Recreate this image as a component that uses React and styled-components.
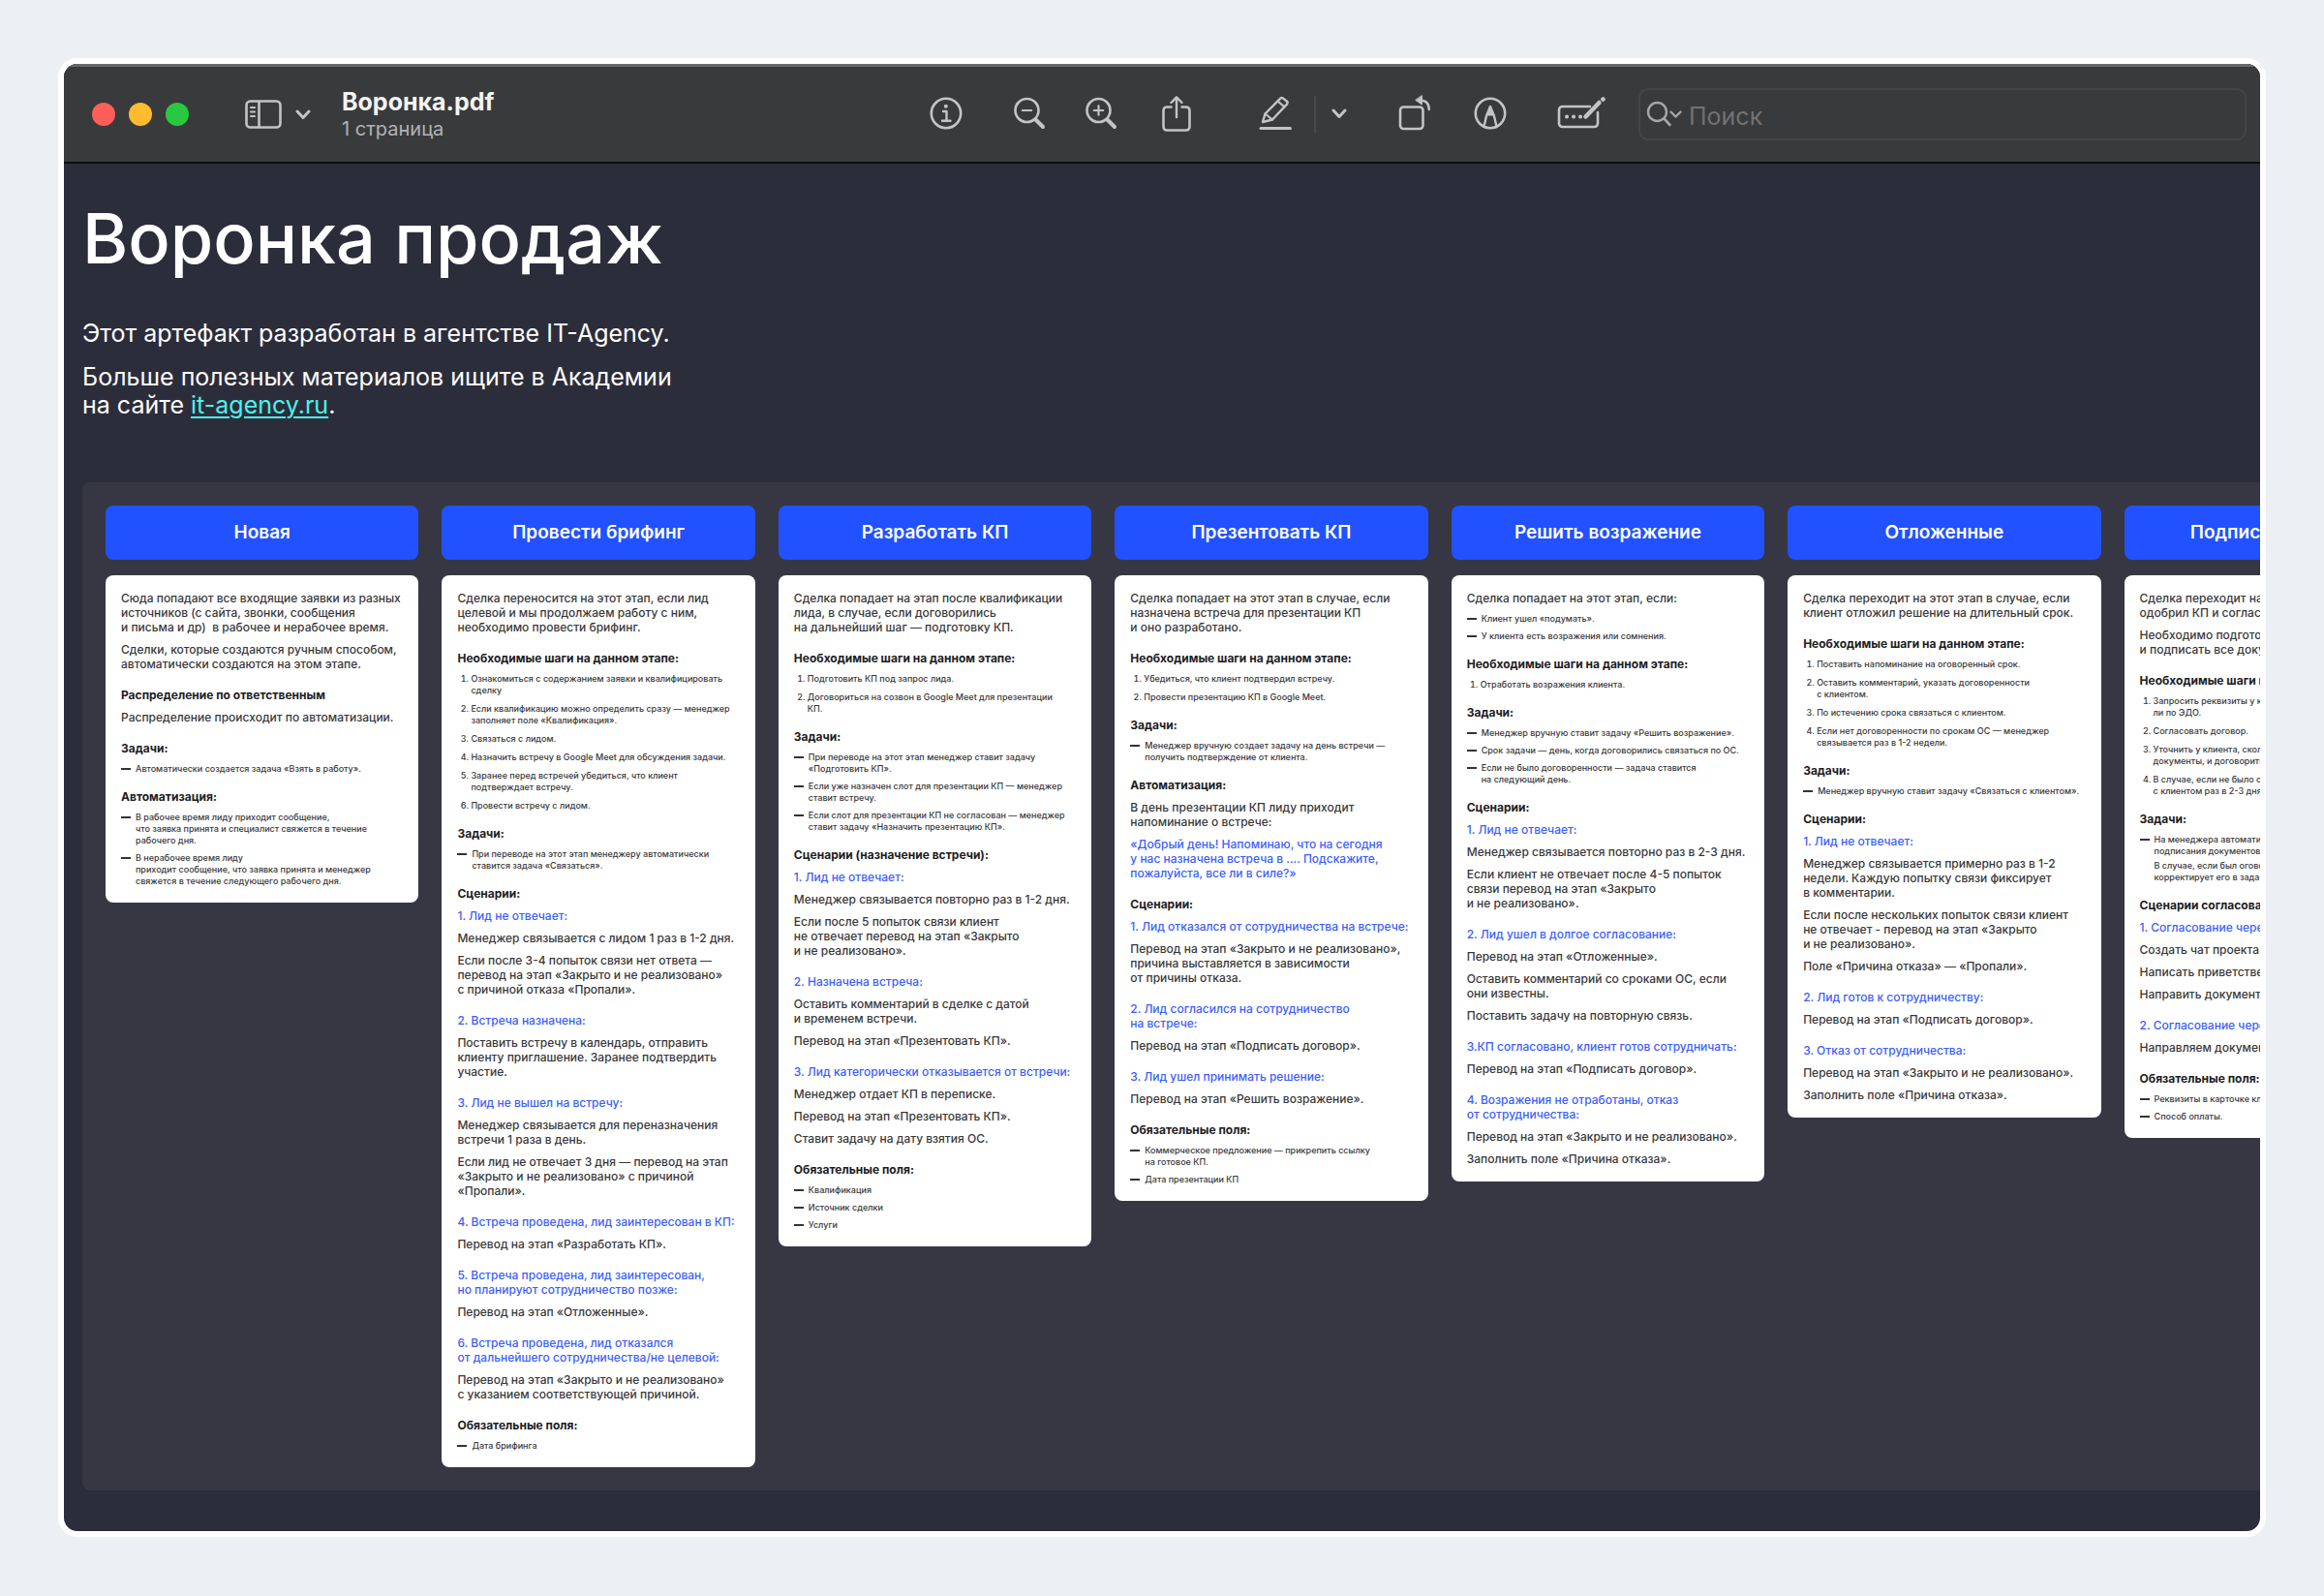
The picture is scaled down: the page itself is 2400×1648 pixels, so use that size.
import React from "react";
import styled, { createGlobalStyle } from "styled-components";

const GlobalStyle = createGlobalStyle`
  * {
    box-sizing: border-box;
  }

  body {
    margin: 0;
    background: #ecf0f5;
    font-family: Inter, "Open Sans", sans-serif;
  }

  h1, h2, h3, h4, p, ul, ol {
    margin: 0;
    padding: 0;
  }
`;

const Page = styled.div`
  min-height: 100vh;
  padding: 60px;
`;

const Window = styled.main`
  border: 6px solid #fff;
  border-radius: 20px;
  background: #2c2d3a;
  overflow: hidden;
`;

const Toolbar = styled.header`
  display: flex;
  align-items: center;
  height: 103px;
  padding: 0 14px 0 29px;
  background: #393a3c;
  border-top: 3px solid #666869;
  border-bottom: 2px solid #0d0e11;
  color: #c3c4c5;
`;

const Lights = styled.div`
  display: flex;
  gap: 14px;
  margin-right: 58px;
`;

const Light = styled.button`
  width: 24px;
  height: 24px;
  padding: 0;
  border: 0;
  border-radius: 50%;
  background: ${(props) => props.$color};
`;

const SidebarButton = styled.button`
  display: flex;
  align-items: center;
  gap: 14px;
  margin-right: 32px;
  padding: 0;
  border: 0;
  background: none;
  color: inherit;
`;

const FileInfo = styled.div`
  flex: 1;
  white-space: nowrap;
`;

const FileName = styled.h2`
  font-size: 25px;
  line-height: 30px;
  font-weight: 700;
  color: #f4f4f4;
`;

const FilePages = styled.p`
  font-size: 20px;
  line-height: 26px;
  color: #b2b3b4;
`;

const Tool = styled.button`
  display: flex;
  align-items: center;
  justify-content: center;
  flex: none;
  width: ${(props) => (props.$narrow ? 42 : 74)}px;
  height: 48px;
  margin-left: ${(props) => props.$before || 0}px;
  padding: 0 0 2px;
  border: 0;
  background: none;
  color: inherit;
`;

const Divider = styled.span`
  width: 2px;
  height: 38px;
  margin: 0 3px;
  background: #48494b;
`;

const Search = styled.label`
  display: flex;
  align-items: center;
  gap: 6px;
  width: 628px;
  height: 54px;
  margin-left: 22px;
  padding-left: 6px;
  border: 2px solid #444547;
  border-radius: 10px;
  color: #a5a6a7;
`;

const SearchInput = styled.input`
  flex: 1;
  min-width: 0;
  padding: 4px 0 0;
  border: 0;
  outline: 0;
  background: none;
  color: #fff;
  font-family: inherit;
  font-size: 25px;

  &::placeholder {
    color: #717273;
    opacity: 1;
  }
`;

const Svg = styled.svg`
  display: block;
  fill: none;
  stroke: currentColor;
  stroke-width: 2.6;
  stroke-linecap: round;
  stroke-linejoin: round;
`;

const Document = styled.article`
  padding: 36px 0 42px 19px;
`;

const Title = styled.h1`
  font-size: 72px;
  line-height: 82px;
  font-weight: 500;
  color: #fff;
  white-space: nowrap;
`;

const Intro = styled.div`
  display: flex;
  flex-direction: column;
  gap: 16px;
  margin: 43px 0 65px;
  font-size: 25px;
  line-height: 29px;
  color: #fff;
  white-space: pre;

  a {
    color: #4bf3ea;
    text-underline-offset: 3px;
    text-decoration-thickness: 2px;
  }
`;

const Board = styled.div`
  display: grid;
  grid-template-columns: repeat(7, 1fr);
  align-items: start;
  gap: 24px;
  min-width: 2456px;
  padding: 24px;
  border-radius: 8px;
  background: #363743;
`;

const Column = styled.section`
  display: flex;
  flex-direction: column;
  gap: 16px;
  min-width: 0;
`;

const Stage = styled.h2`
  height: 56px;
  border-radius: 8px;
  background: #2251ff;
  color: #fff;
  font-size: 19px;
  line-height: 56px;
  font-weight: 600;
  text-align: center;
`;

const Card = styled.div`
  display: flex;
  flex-direction: column;
  gap: 8px;
  padding: 16px;
  border-radius: 8px;
  background: #fff;
  color: #38383a;
  font-size: 12px;
  line-height: 15px;
  font-weight: 500;
  white-space: pre;
`;

const Steps = styled.ol`
  display: flex;
  flex-direction: column;
  gap: 7px;
  padding-left: 14px;
  font-size: 9px;
  line-height: 12px;
`;

const Notes = styled.ul`
  display: flex;
  flex-direction: column;
  gap: 6px;
  list-style: none;
  font-size: 9px;
  line-height: 12px;
`;

const Note = styled.li`
  display: flex;
  gap: 5px;

  &::before {
    content: "";
    flex: none;
    width: 10px;
    height: 2px;
    margin-top: 5px;
    background: #333;
  }
`;

const NoteText = styled.div`
  display: flex;
  flex-direction: column;
  gap: 3px;
`;

const Heading = styled.h3`
  margin-top: 9px;
  color: #1d1d1f;
  font-size: 12px;
  line-height: 15px;
  font-weight: 700;

  ${Steps} + &,
  ${Notes} + & {
    margin-top: 7px;
  }
`;

const Scenario = styled.h4`
  margin-top: 9px;
  color: #3a5eff;
  font-size: 12px;
  line-height: 15px;
  font-weight: 500;

  ${Heading} + & {
    margin-top: 0;
  }
`;

const Quote = styled.p`
  color: #3a5eff;
`;

const columns = [
  {
    name: "Новая",
    blocks: [
      ["p", "Сюда попадают все входящие заявки из разных\nисточников (с сайта, звонки, сообщения\nи письма и др)  в рабочее и нерабочее время."],
      ["p", "Сделки, которые создаются ручным способом,\nавтоматически создаются на этом этапе."],
      ["h", "Распределение по ответственным"],
      ["p", "Распределение происходит по автоматизации."],
      ["h", "Задачи:"],
      ["ul", ["Автоматически создается задача «Взять в работу»."]],
      ["h", "Автоматизация:"],
      ["ul", [
        "В рабочее время лиду приходит сообщение,\nчто заявка принята и специалист свяжется в течение\nрабочего дня.",
        "В нерабочее время лиду\nприходит сообщение, что заявка принята и менеджер\nсвяжется в течение следующего рабочего дня.",
      ]],
    ],
  },
  {
    name: "Провести брифинг",
    blocks: [
      ["p", "Сделка переносится на этот этап, если лид\nцелевой и мы продолжаем работу с ним,\nнеобходимо провести брифинг."],
      ["h", "Необходимые шаги на данном этапе:"],
      ["ol", [
        "Ознакомиться с содержанием заявки и квалифицировать\nсделку",
        "Если квалификацию можно определить сразу — менеджер\nзаполняет поле «Квалификация».",
        "Связаться с лидом.",
        "Назначить встречу в Google Meet для обсуждения задачи.",
        "Заранее перед встречей убедиться, что клиент\nподтверждает встречу.",
        "Провести встречу с лидом.",
      ]],
      ["h", "Задачи:"],
      ["ul", ["При переводе на этот этап менеджеру автоматически\nставится задача «Связаться»."]],
      ["h", "Сценарии:"],
      ["s", "1. Лид не отвечает:"],
      ["p", "Менеджер связывается с лидом 1 раз в 1-2 дня."],
      ["p", "Если после 3-4 попыток связи нет ответа —\nперевод на этап «Закрыто и не реализовано»\nс причиной отказа «Пропали»."],
      ["s", "2. Встреча назначена:"],
      ["p", "Поставить встречу в календарь, отправить\nклиенту приглашение. Заранее подтвердить\nучастие."],
      ["s", "3. Лид не вышел на встречу:"],
      ["p", "Менеджер связывается для переназначения\nвстречи 1 раза в день."],
      ["p", "Если лид не отвечает 3 дня — перевод на этап\n«Закрыто и не реализовано» с причиной\n«Пропали»."],
      ["s", "4. Встреча проведена, лид заинтересован в КП:"],
      ["p", "Перевод на этап «Разработать КП»."],
      ["s", "5. Встреча проведена, лид заинтересован,\nно планируют сотрудничество позже:"],
      ["p", "Перевод на этап «Отложенные»."],
      ["s", "6. Встреча проведена, лид отказался\nот дальнейшего сотрудничества/не целевой:"],
      ["p", "Перевод на этап «Закрыто и не реализовано»\nс указанием соответствующей причиной."],
      ["h", "Обязательные поля:"],
      ["ul", ["Дата брифинга"]],
    ],
  },
  {
    name: "Разработать КП",
    blocks: [
      ["p", "Сделка попадает на этап после квалификации\nлида, в случае, если договорились\nна дальнейший шаг — подготовку КП."],
      ["h", "Необходимые шаги на данном этапе:"],
      ["ol", [
        "Подготовить КП под запрос лида.",
        "Договориться на созвон в Google Meet для презентации\nКП.",
      ]],
      ["h", "Задачи:"],
      ["ul", [
        "При переводе на этот этап менеджер ставит задачу\n«Подготовить КП».",
        "Если уже назначен слот для презентации КП — менеджер\nставит встречу.",
        "Если слот для презентации КП не согласован — менеджер\nставит задачу «Назначить презентацию КП».",
      ]],
      ["h", "Сценарии (назначение встречи):"],
      ["s", "1. Лид не отвечает:"],
      ["p", "Менеджер связывается повторно раз в 1-2 дня."],
      ["p", "Если после 5 попыток связи клиент\nне отвечает перевод на этап «Закрыто\nи не реализовано»."],
      ["s", "2. Назначена встреча:"],
      ["p", "Оставить комментарий в сделке с датой\nи временем встречи."],
      ["p", "Перевод на этап «Презентовать КП»."],
      ["s", "3. Лид категорически отказывается от встречи:"],
      ["p", "Менеджер отдает КП в переписке."],
      ["p", "Перевод на этап «Презентовать КП»."],
      ["p", "Ставит задачу на дату взятия ОС."],
      ["h", "Обязательные поля:"],
      ["ul", ["Квалификация", "Источник сделки", "Услуги"]],
    ],
  },
  {
    name: "Презентовать КП",
    blocks: [
      ["p", "Сделка попадает на этот этап в случае, если\nназначена встреча для презентации КП\nи оно разработано."],
      ["h", "Необходимые шаги на данном этапе:"],
      ["ol", ["Убедиться, что клиент подтвердил встречу.", "Провести презентацию КП в Google Meet."]],
      ["h", "Задачи:"],
      ["ul", ["Менеджер вручную создает задачу на день встречи —\nполучить подтверждение от клиента."]],
      ["h", "Автоматизация:"],
      ["p", "В день презентации КП лиду приходит\nнапоминание о встрече:"],
      ["q", "«Добрый день! Напоминаю, что на сегодня\nу нас назначена встреча в .... Подскажите,\nпожалуйста, все ли в силе?»"],
      ["h", "Сценарии:"],
      ["s", "1. Лид отказался от сотрудничества на встрече:"],
      ["p", "Перевод на этап «Закрыто и не реализовано»,\nпричина выставляется в зависимости\nот причины отказа."],
      ["s", "2. Лид согласился на сотрудничество\nна встрече:"],
      ["p", "Перевод на этап «Подписать договор»."],
      ["s", "3. Лид ушел принимать решение:"],
      ["p", "Перевод на этап «Решить возражение»."],
      ["h", "Обязательные поля:"],
      ["ul", ["Коммерческое предложение — прикрепить ссылку\nна готовое КП.", "Дата презентации КП"]],
    ],
  },
  {
    name: "Решить возражение",
    blocks: [
      ["p", "Сделка попадает на этот этап, если:"],
      ["ul", ["Клиент ушел «подумать».", "У клиента есть возражения или сомнения."]],
      ["h", "Необходимые шаги на данном этапе:"],
      ["ol", ["Отработать возражения клиента."]],
      ["h", "Задачи:"],
      ["ul", [
        "Менеджер вручную ставит задачу «Решить возражение».",
        "Срок задачи — день, когда договорились связаться по ОС.",
        "Если не было договоренности — задача ставится\nна следующий день.",
      ]],
      ["h", "Сценарии:"],
      ["s", "1. Лид не отвечает:"],
      ["p", "Менеджер связывается повторно раз в 2-3 дня."],
      ["p", "Если клиент не отвечает после 4-5 попыток\nсвязи перевод на этап «Закрыто\nи не реализовано»."],
      ["s", "2. Лид ушел в долгое согласование:"],
      ["p", "Перевод на этап «Отложенные»."],
      ["p", "Оставить комментарий со сроками ОС, если\nони известны."],
      ["p", "Поставить задачу на повторную связь."],
      ["s", "3.КП согласовано, клиент готов сотрудничать:"],
      ["p", "Перевод на этап «Подписать договор»."],
      ["s", "4. Возражения не отработаны, отказ\nот сотрудничества:"],
      ["p", "Перевод на этап «Закрыто и не реализовано»."],
      ["p", "Заполнить поле «Причина отказа»."],
    ],
  },
  {
    name: "Отложенные",
    blocks: [
      ["p", "Сделка переходит на этот этап в случае, если\nклиент отложил решение на длительный срок."],
      ["h", "Необходимые шаги на данном этапе:"],
      ["ol", [
        "Поставить напоминание на оговоренный срок.",
        "Оставить комментарий, указать договоренности\nс клиентом.",
        "По истечению срока связаться с клиентом.",
        "Если нет договоренности по срокам ОС — менеджер\nсвязывается раз в 1-2 недели.",
      ]],
      ["h", "Задачи:"],
      ["ul", ["Менеджер вручную ставит задачу «Связаться с клиентом»."]],
      ["h", "Сценарии:"],
      ["s", "1. Лид не отвечает:"],
      ["p", "Менеджер связывается примерно раз в 1-2\nнедели. Каждую попытку связи фиксирует\nв комментарии."],
      ["p", "Если после нескольких попыток связи клиент\nне отвечает - перевод на этап «Закрыто\nи не реализовано»."],
      ["p", "Поле «Причина отказа» — «Пропали»."],
      ["s", "2. Лид готов к сотрудничеству:"],
      ["p", "Перевод на этап «Подписать договор»."],
      ["s", "3. Отказ от сотрудничества:"],
      ["p", "Перевод на этап «Закрыто и не реализовано»."],
      ["p", "Заполнить поле «Причина отказа»."],
    ],
  },
  {
    name: "Подписать договор",
    blocks: [
      ["p", "Сделка переходит на этот этап, если клиент\nодобрил КП и согласовал условия."],
      ["p", "Необходимо подготовить договор\nи подписать все документы."],
      ["h", "Необходимые шаги на данном этапе:"],
      ["ol", [
        "Запросить реквизиты у клиента и уточнить, работает\nли по ЭДО.",
        "Согласовать договор.",
        "Уточнить у клиента, сколько времени займут\nдокументы, и договориться о сроках.",
        "В случае, если не было ответа, связываться\nс клиентом раз в 2-3 дня.",
      ]],
      ["h", "Задачи:"],
      ["ul", ["На менеджера автоматически ставится задача\nподписания документов.|В случае, если был оговорен срок, менеджер\nкорректирует его в задаче."]],
      ["h", "Сценарии согласования:"],
      ["s", "1. Согласование через чат:"],
      ["p", "Создать чат проекта с клиентом."],
      ["p", "Написать приветственное сообщение."],
      ["p", "Направить документы на согласование."],
      ["s", "2. Согласование через почту:"],
      ["p", "Направляем документы на почту."],
      ["h", "Обязательные поля:"],
      ["ul", ["Реквизиты в карточке клиента.", "Способ оплаты."]],
    ],
  },
];

function Block({ type, value }) {
  switch (type) {
    case "h":
      return <Heading>{value}</Heading>;
    case "s":
      return <Scenario>{value}</Scenario>;
    case "q":
      return <Quote>{value}</Quote>;
    case "ol":
      return (
        <Steps>
          {value.map((text) => (
            <li key={text}>{text}</li>
          ))}
        </Steps>
      );
    case "ul":
      return (
        <Notes>
          {value.map((text) => (
            <Note key={text}>
              <NoteText>
                {text.split("|").map((part) => (
                  <p key={part}>{part}</p>
                ))}
              </NoteText>
            </Note>
          ))}
        </Notes>
      );
    default:
      return <p>{value}</p>;
  }
}

const Chevron = () => (
  <Svg width="16" height="12" viewBox="0 0 16 12">
    <path d="M2 3l6 6.500 6-6.500" strokeWidth="3" />
  </Svg>
);

const SidebarIcon = () => (
  <Svg width="38" height="30" viewBox="0 0 38 30">
    <rect x="1.500" y="1.500" width="35" height="27" rx="4" />
    <path d="M14.500 2v26" />
    <path d="M6 8h4M6 12.500h4M6 17h4" strokeWidth="2" />
  </Svg>
);

const InfoIcon = () => (
  <Svg width="34" height="34" viewBox="0 0 34 34">
    <circle cx="17" cy="17" r="15.200" />
    <circle cx="16.800" cy="9.800" r="2" fill="currentColor" stroke="none" />
    <path d="M14 15h3.500v9.500M13 24.800h8.500" strokeWidth="2.400" />
  </Svg>
);

const ZoomIcon = ({ plus }) => (
  <Svg width="34" height="34" viewBox="0 0 34 34">
    <circle cx="14.500" cy="14" r="12" />
    <path d="M9.800 14h9.400" strokeWidth="2.200" />
    {plus && <path d="M14.500 9.300v9.400" strokeWidth="2.200" />}
    <path d="M23.500 23.500l7.500 7.500" strokeWidth="4" />
  </Svg>
);

const ShareIcon = () => (
  <Svg width="30" height="38" viewBox="0 0 30 38">
    <path d="M9.500 12.500H5a3.500 3.500 0 0 0-3.500 3.500v17A3.500 3.500 0 0 0 5 36.500h20a3.500 3.500 0 0 0 3.500-3.500V16a3.500 3.500 0 0 0-3.500-3.500h-4.500" />
    <path d="M15 23V2.500M9.500 8L15 2.300 20.500 8" strokeWidth="2.400" />
  </Svg>
);

const PencilIcon = () => (
  <Svg width="34" height="38" viewBox="0 0 34 38">
    <path d="M4 28l2.500-8.500L22 3.800c1-1 2.200-1 3.200-.2l3.600 2.900c1 .9 1.100 2 .2 3.100L14 25.500 4 28z" strokeWidth="2.400" />
    <path d="M6.500 19.500l7.500 6M19.500 6.500l7 5.800" strokeWidth="2.200" />
    <path d="M2 34.500h30.500" strokeWidth="3" />
  </Svg>
);

const RotateIcon = () => (
  <Svg width="34" height="38" viewBox="0 0 34 38">
    <rect x="2" y="12.500" width="23.500" height="22.500" rx="3.500" />
    <path d="M22 5.500c6.500 0 9.800 3 9.800 9.500" strokeWidth="2.400" />
    <path d="M24.500 1v9l-6.500-4.500z" fill="currentColor" strokeWidth="1" />
  </Svg>
);

const MarkupIcon = () => (
  <Svg width="34" height="34" viewBox="0 0 34 34">
    <circle cx="17" cy="17" r="15.200" />
    <path d="M10.500 30.500l2.600-11L17 10l3.900 9.500 2.600 11" strokeWidth="2.400" />
    <path d="M13.200 19.500L17 9l3.800 10.500z" fill="currentColor" stroke="none" />
  </Svg>
);

const FormIcon = () => (
  <Svg width="50" height="34" viewBox="0 0 50 34">
    <path d="M34 10H5.500A3.500 3.500 0 0 0 2 13.500v14A3.500 3.500 0 0 0 5.500 31h33a3.500 3.500 0 0 0 3.500-3.500V16" />
    <path d="M29.500 20.500L43.500 6" strokeWidth="4.500" />
    <path d="M47.500 2.500l-.1.100" strokeWidth="4.500" />
    <path d="M10 20.500h.1M17 20.500h.1M24 20.500h.1" strokeWidth="4" />
  </Svg>
);

const SearchIcon = () => (
  <Svg width="38" height="28" viewBox="0 0 38 28">
    <circle cx="11.500" cy="11.500" r="9.500" strokeWidth="2.400" />
    <path d="M18.500 18.500l6 6.500" />
    <path d="M25.500 11.500l5 5 5-5" strokeWidth="2.400" />
  </Svg>
);

const App = () => (
  <Page>
    <GlobalStyle />
    <Window>
      <Toolbar>
        <Lights>
          <Light $color="#ff5f57" aria-label="Закрыть" />
          <Light $color="#febc2e" aria-label="Свернуть" />
          <Light $color="#28c840" aria-label="Развернуть" />
        </Lights>
        <SidebarButton aria-label="Боковая панель">
          <SidebarIcon />
          <Chevron />
        </SidebarButton>
        <FileInfo>
          <FileName>Воронка.pdf</FileName>
          <FilePages>1 страница</FilePages>
        </FileInfo>
        <Tool aria-label="Инспектор">
          <InfoIcon />
        </Tool>
        <Tool $before={12} aria-label="Уменьшить">
          <ZoomIcon />
        </Tool>
        <Tool aria-label="Увеличить">
          <ZoomIcon plus />
        </Tool>
        <Tool $before={4} aria-label="Поделиться">
          <ShareIcon />
        </Tool>
        <Tool $before={28} aria-label="Выделить">
          <PencilIcon />
        </Tool>
        <Divider />
        <Tool $narrow aria-label="Цвет выделения">
          <Chevron />
        </Tool>
        <Tool $before={20} aria-label="Повернуть">
          <RotateIcon />
        </Tool>
        <Tool $before={4} aria-label="Разметка">
          <MarkupIcon />
        </Tool>
        <Tool $before={20} aria-label="Заполнить форму">
          <FormIcon />
        </Tool>
        <Search>
          <SearchIcon />
          <SearchInput type="text" placeholder="Поиск" aria-label="Поиск" />
        </Search>
      </Toolbar>
      <Document>
        <Title>Воронка продаж</Title>
        <Intro>
          <p>Этот артефакт разработан в агентстве IT-Agency.</p>
          <p>
            Больше полезных материалов ищите в Академии
            <br />
            {"на сайте "}
            <a href="#it-agency">it-agency.ru</a>.
          </p>
        </Intro>
        <Board>
          {columns.map((column) => (
            <Column key={column.name}>
              <Stage>{column.name}</Stage>
              <Card>
                {column.blocks.map(([type, value], index) => (
                  <Block key={index} type={type} value={value} />
                ))}
              </Card>
            </Column>
          ))}
        </Board>
      </Document>
    </Window>
  </Page>
);

export default App;
